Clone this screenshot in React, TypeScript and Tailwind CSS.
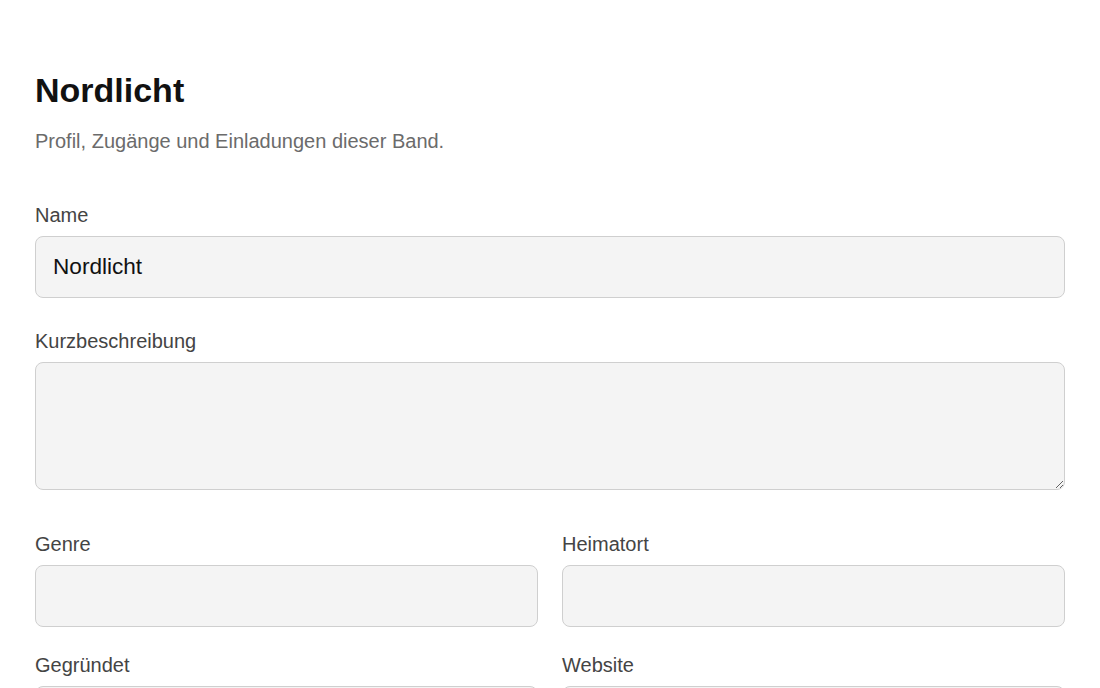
export default function App() {
  const font = { fontFamily: '"Liberation Sans", Arial, sans-serif' }
  const inputCls =
    'block w-full h-[62px] rounded-[8px] border border-[#cfcfcf] bg-[#f4f4f4] px-[17px] text-[22.6px] text-[#111] outline-none'

  return (
    <div className="min-h-screen bg-white px-[35px] pt-[70px]" style={font}>
      <h1 className="text-[34px] leading-[41px] font-bold text-[#111]">Nordlicht</h1>
      <p className="mt-[18px] text-[20px] leading-[24px] text-[#6b6b6b]">
        Profil, Zugänge und Einladungen dieser Band.
      </p>

      <div className="mt-[50px]">
        <label className="block text-[20px] leading-[24px] text-[#444] mb-[9px]">Name</label>
        <input className={inputCls} defaultValue="Nordlicht" style={font} />
      </div>

      <div className="mt-[31px]">
        <label className="block text-[20px] leading-[24px] text-[#444] mb-[9px]">Kurzbeschreibung</label>
        <textarea
          className="block w-full h-[128px] rounded-[8px] border border-[#cfcfcf] bg-[#f4f4f4] px-[17px] py-3 text-[22.6px] text-[#111] outline-none resize-y"
          style={font}
        />
      </div>

      <div className="mt-[42px] grid grid-cols-2 gap-x-[24px] gap-y-[26px]">
        {['Genre', 'Heimatort', 'Gegründet', 'Website'].map((l) => (
          <div key={l}>
            <label className="block text-[20px] leading-[24px] text-[#444] mb-[9px]">{l}</label>
            <input className={inputCls} style={font} />
          </div>
        ))}
      </div>
    </div>
  )
}
